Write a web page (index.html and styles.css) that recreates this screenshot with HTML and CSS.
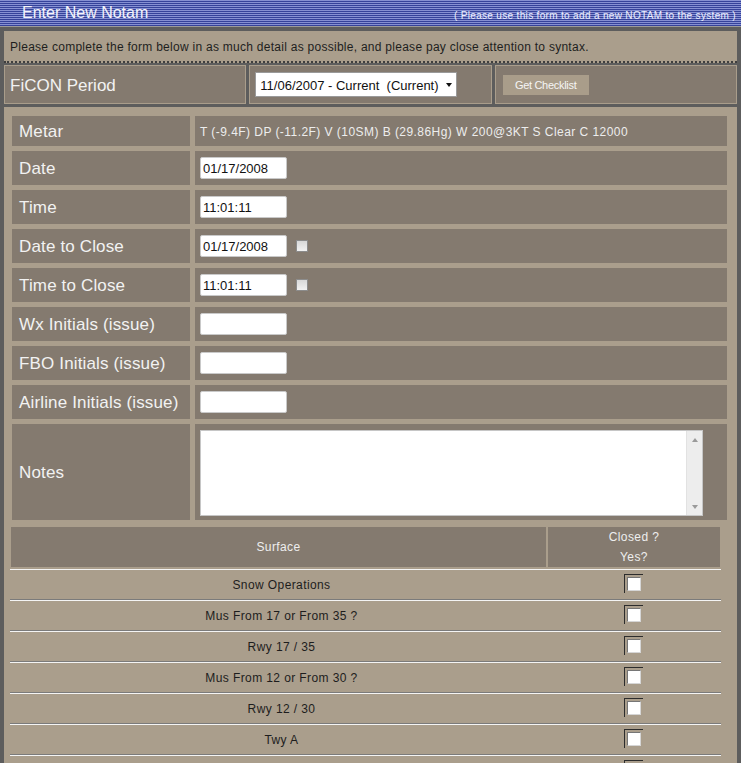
FILE: index.html
```html
<!DOCTYPE html>
<html>
<head>
<meta charset="utf-8">
<title>Enter New Notam</title>
<link rel="stylesheet" href="styles.css">
</head>
<body>
<div class="header">
  <span class="title">Enter New Notam</span>
  <span class="hint">( Please use this form to add a new NOTAM to the system )</span>
</div>
<div class="frame">
  <div class="msg">Please complete the form below in as much detail as possible, and please pay close attention to syntax.</div>
  <div class="ficon">
    <div class="fcell"><span class="flabel">FiCON Period</span></div>
    <div class="fcell">
      <div class="selwrap">
        <select class="sel"><option>11/06/2007 - Current&nbsp; (Current)</option></select>
        <span class="selarrow"></span>
      </div>
    </div>
    <div class="fcell"><button class="btn" type="button">Get Checklist</button></div>
  </div>
  <div class="formarea">
    <div class="grid">
      <div class="lab">Metar</div>
      <div class="val metar">T (-9.4F) DP (-11.2F) V (10SM) B (29.86Hg) W 200@3KT S Clear C 12000</div>
      <div class="lab">Date</div>
      <div class="val"><input class="inp" type="text" value="01/17/2008"></div>
      <div class="lab">Time</div>
      <div class="val"><input class="inp" type="text" value="11:01:11"></div>
      <div class="lab">Date to Close</div>
      <div class="val"><input class="inp" type="text" value="01/17/2008"><span class="chk"></span></div>
      <div class="lab">Time to Close</div>
      <div class="val"><input class="inp" type="text" value="11:01:11"><span class="chk"></span></div>
      <div class="lab">Wx Initials (issue)</div>
      <div class="val"><input class="inp" type="text" value=""></div>
      <div class="lab">FBO Initials (issue)</div>
      <div class="val"><input class="inp" type="text" value=""></div>
      <div class="lab">Airline Initials (issue)</div>
      <div class="val"><input class="inp" type="text" value=""></div>
      <div class="lab">Notes</div>
      <div class="val notes">
        <div class="ta">
          <textarea class="ta-body"></textarea>
          <div class="ta-sb"><span class="up"></span><span class="dn"></span></div>
        </div>
      </div>
    </div>
    <div class="surface">
      <div class="shead">
        <div class="sh1">Surface</div>
        <div class="sh2"><span>Closed ?</span><span>Yes?</span></div>
      </div>
      <div class="srow"><div class="sname">Snow Operations</div><div class="scheck"><span class="cb"><span class="cbin"></span></span></div></div>
      <div class="srow"><div class="sname">Mus From 17 or From 35 ?</div><div class="scheck"><span class="cb"><span class="cbin"></span></span></div></div>
      <div class="srow"><div class="sname">Rwy 17 / 35</div><div class="scheck"><span class="cb"><span class="cbin"></span></span></div></div>
      <div class="srow"><div class="sname">Mus From 12 or From 30 ?</div><div class="scheck"><span class="cb"><span class="cbin"></span></span></div></div>
      <div class="srow"><div class="sname">Rwy 12 / 30</div><div class="scheck"><span class="cb"><span class="cbin"></span></span></div></div>
      <div class="srow"><div class="sname">Twy A</div><div class="scheck"><span class="cb"><span class="cbin"></span></span></div></div>
      <div class="srow"><div class="sname"></div><div class="scheck"><span class="cb"><span class="cbin"></span></span></div></div>
    </div>
  </div>
</div>
</body>
</html>
```

FILE: styles.css
```css
* { box-sizing: border-box; }
html, body { margin: 0; padding: 0; overflow: hidden; }
body {
  width: 741px;
  height: 763px;
  background: #aa9e8c;
  font-family: "Liberation Sans", Arial, sans-serif;
}

.header {
  height: 27px;
  background: repeating-linear-gradient(to bottom, #8690d3 0px, #8690d3 1px, #35429a 1px, #35429a 2px);
  border-bottom: 1px solid #9a9a9a;
  display: flex;
  align-items: center;
  justify-content: space-between;
  padding: 0 5px 0 22px;
}
.title {
  font-size: 16px;
  color: #f4f4fa;
  margin-top: -1px;
}
.hint {
  font-size: 10px;
  color: #eef0ff;
  letter-spacing: 0.33px;
  margin-top: 4px;
}

.frame {
  border-left: 4px solid #5d5d5d;
  border-right: 4px solid #5d5d5d;
  border-top: 4px solid #5d5d5d;
  background: #aa9e8c;
  height: 736px;
}

.msg {
  height: 32px;
  padding: 2px 0 0 6px;
  display: flex;
  align-items: center;
  font-size: 12px;
  color: #1e1e1e;
  letter-spacing: 0.27px;
  border-bottom: 2px dotted #3e3e3e;
}

.ficon {
  display: flex;
  gap: 3px;
  background: #5d5d5d;
  padding: 2px 0 3px 0;
}
.fcell {
  flex: 1;
  height: 39px;
  background: #847a6f;
  border: 1px solid #a99d8b;
  display: flex;
  align-items: center;
}
.flabel {
  font-size: 17px;
  color: #f2f2f2;
  padding: 2px 0 0 5px;
}
.selwrap {
  position: relative;
  margin-left: 5px;
  width: 202px;
  height: 25px;
}
.sel {
  appearance: none;
  -webkit-appearance: none;
  width: 202px;
  height: 25px;
  background: #fff;
  border: 1px solid #9a9a9a;
  border-radius: 0;
  font-family: "Liberation Sans", Arial, sans-serif;
  font-size: 13px;
  color: #111;
  padding: 1px 0 0 4px;
  margin: 0;
}
.selarrow {
  position: absolute;
  left: 191px;
  top: 11px;
  width: 0;
  height: 0;
  border-left: 3.5px solid transparent;
  border-right: 3.5px solid transparent;
  border-top: 4px solid #111;
}
.btn {
  margin-left: 7px;
  width: 86px;
  height: 20px;
  background: #a99d8a;
  border: none;
  color: #f5f5f5;
  font-family: "Liberation Sans", Arial, sans-serif;
  font-size: 11px;
  letter-spacing: -0.3px;
  padding: 0;
}

.formarea {
  padding: 9px 10px 0 8px;
}
.grid {
  display: grid;
  grid-template-columns: 178px 1fr;
  grid-template-rows: 30px repeat(7, 34px) 96px;
  gap: 5px;
}
.lab {
  background: #847a6f;
  color: #f2f2f2;
  font-size: 17px;
  letter-spacing: 0.15px;
  padding: 2px 0 0 7px;
  display: flex;
  align-items: center;
  white-space: nowrap;
}
.val {
  background: #847a6f;
  display: flex;
  align-items: center;
  padding-left: 5px;
}
.metar {
  font-size: 12px;
  color: #ededed;
  letter-spacing: 0.45px;
  padding-top: 2px;
}
.inp {
  width: 87px;
  height: 22px;
  border: 1px solid #c9c9c9;
  border-radius: 2px;
  background: #fff;
  font-family: "Liberation Sans", Arial, sans-serif;
  font-size: 13px;
  color: #111;
  padding: 0 0 0 2px;
  margin: 0;
  outline: none;
}
.chk {
  width: 12px;
  height: 12px;
  margin-left: 9px;
  border: 1px solid #8c8c8c;
  background: linear-gradient(#d8d8d8, #f2f2f2);
}
.notes {
  align-items: flex-start;
  padding-top: 6px;
}
.ta {
  width: 503px;
  height: 86px;
  border: 1px solid #c6c6c6;
  background: #fff;
  display: flex;
}
.ta-body {
  flex: 1;
  border: none;
  resize: none;
  outline: none;
  margin: 0;
  padding: 0;
  background: #fff;
}
.ta-sb {
  width: 16px;
  background: #ededed;
  border-left: 1px solid #e2e2e2;
  display: flex;
  flex-direction: column;
  justify-content: space-between;
  align-items: center;
  padding: 7px 0 6px 0;
}
.ta-sb .up {
  width: 0; height: 0;
  border-left: 3.5px solid transparent;
  border-right: 3.5px solid transparent;
  border-bottom: 4px solid #9a9a9a;
}
.ta-sb .dn {
  width: 0; height: 0;
  border-left: 3.5px solid transparent;
  border-right: 3.5px solid transparent;
  border-top: 4px solid #9a9a9a;
}

.surface {
  margin: 7px 0 0 -2px;
  width: 711px;
}
.shead {
  display: flex;
  gap: 2px;
  padding: 0 1px;
  height: 40px;
  margin-bottom: 2px;
}
.sh1 {
  width: 535px;
  background: #847a6f;
  color: #eeeeee;
  font-size: 12px;
  letter-spacing: 0.4px;
  display: flex;
  align-items: center;
  justify-content: center;
}
.sh2 {
  flex: 1;
  background: #847a6f;
  color: #eeeeee;
  font-size: 12px;
  letter-spacing: 0.4px;
  display: flex;
  flex-direction: column;
  align-items: center;
  justify-content: center;
  line-height: 20px;
}
.srow {
  display: flex;
  height: 31px;
  border-top: 1px solid #f4f4f4;
  border-bottom: 1px solid #7b7b7b;
}
.sname {
  width: 536px;
  display: flex;
  align-items: center;
  justify-content: center;
  padding-left: 7px;
  font-size: 12px;
  color: #1d1d1d;
  letter-spacing: 0.4px;
}
.scheck {
  flex: 1;
  display: flex;
  justify-content: center;
  align-items: flex-start;
  padding-top: 4px;
}
.cb {
  width: 19px;
  height: 19px;
  border-top: 1px solid #2c2c2c;
  border-left: 1px solid #2c2c2c;
  padding: 2px 0 0 2px;
}
.cbin {
  display: block;
  width: 14px;
  height: 14px;
  background: #fff;
  border-top: 1px solid #767676;
  border-left: 1px solid #767676;
  border-right: 1px solid #d6d6d6;
  border-bottom: 1px solid #d6d6d6;
}
```
